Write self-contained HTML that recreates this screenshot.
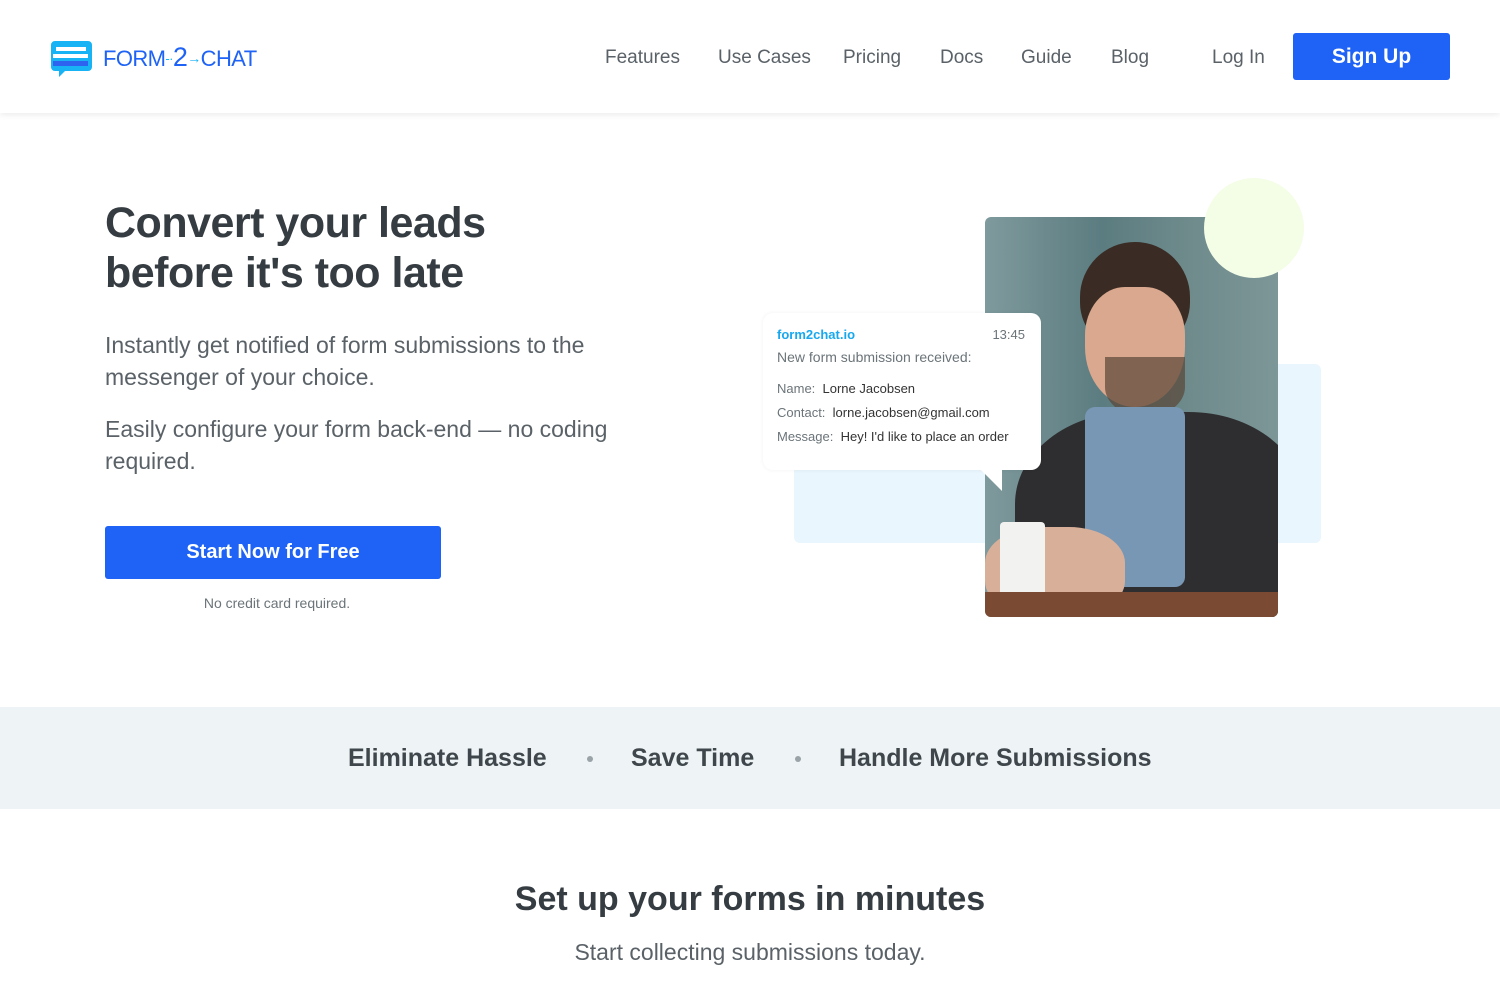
<!DOCTYPE html>
<html><head><meta charset="utf-8"><style>
*{margin:0;padding:0;box-sizing:border-box}
body{width:1500px;height:1000px;overflow:hidden;background:#fff;font-family:"Liberation Sans",sans-serif;color:#3d4449;position:relative}
.hdr{position:absolute;left:0;top:0;width:1500px;height:113px;background:#fff;box-shadow:0 2px 6px rgba(0,0,0,.08);z-index:5}
.nav a{position:absolute;top:47px;font-size:19px;color:#5a6268;text-decoration:none}
.btn{position:absolute;background:#1e63f5;color:#fff;font-weight:bold;border-radius:3px;text-align:center}
h1{position:absolute;left:105px;top:198px;font-size:43px;line-height:50px;font-weight:bold;color:#363d42;letter-spacing:-.5px}
.p{position:absolute;left:105px;font-size:23px;line-height:32px;color:#5a6268}
.band{position:absolute;left:0;top:707px;width:1500px;height:102px;background:#eef3f6}
.band span{position:absolute;top:37px;font-size:25px;font-weight:bold;color:#3f474c}
.dot{width:6px;height:6px;border-radius:3px;background:#9aa3a8;position:absolute;top:756px}
</style></head><body>
<div class="hdr">
<svg style="position:absolute;left:49px;top:39px" width="45" height="40" viewBox="0 0 45 40"><path d="M6 2h33a4 4 0 0 1 4 4v22a4 4 0 0 1-4 4H16l-6 6v-6H6a4 4 0 0 1-4-4V6a4 4 0 0 1 4-4z" fill="#17b3f5"/><rect x="7" y="8" width="30" height="4" fill="#fff"/><rect x="4" y="15" width="35" height="4" fill="#fff"/><rect x="4" y="22" width="35" height="5" fill="#2e63f0"/></svg>
<div style="position:absolute;left:103px;top:42px;font-size:22px;line-height:30px;color:#1e63f5;letter-spacing:-.6px;white-space:nowrap">FORM<span style="color:#17b3f5;font-size:13px;vertical-align:3px">-·</span><span style="font-size:27px">2</span><span style="color:#17b3f5;font-size:14px;vertical-align:3px">→</span>CHAT</div>
<div class="nav"><a style="left:605px">Features</a><a style="left:718px">Use Cases</a><a style="left:843px">Pricing</a><a style="left:940px">Docs</a><a style="left:1021px">Guide</a><a style="left:1111px">Blog</a><a style="left:1212px">Log In</a></div>
<div class="btn" style="left:1293px;top:33px;width:157px;height:47px;line-height:47px;font-size:21px">Sign Up</div>
</div>
<h1>Convert your leads<br>before it's too late</h1>
<div class="p" style="top:329px">Instantly get notified of form submissions to the<br>messenger of your choice.</div>
<div class="p" style="top:413px">Easily configure your form back-end — no coding<br>required.</div>
<div class="btn" style="left:105px;top:526px;width:336px;height:53px;line-height:53px;font-size:20px">Start Now for Free</div>
<div style="position:absolute;left:105px;top:595px;width:344px;text-align:center;font-size:14px;color:#6b7479">No credit card required.</div>

<div style="position:absolute;left:794px;top:364px;width:527px;height:179px;background:#e9f6fd;border-radius:6px"></div>
<div style="position:absolute;left:985px;top:217px;width:293px;height:400px;border-radius:6px;overflow:hidden;background:linear-gradient(90deg,#7f9a9d,#5b7c80 40%,#6f8b8c 70%,#7d9698)">
<div style="position:absolute;left:95px;top:25px;width:110px;height:110px;border-radius:50% 50% 45% 45%;background:#3a2c24"></div>
<div style="position:absolute;left:100px;top:70px;width:100px;height:120px;border-radius:40% 40% 50% 50%;background:#d9a88e"></div>
<div style="position:absolute;left:120px;top:140px;width:80px;height:60px;border-radius:0 0 50% 50%;background:#5a4638;opacity:.7"></div>
<div style="position:absolute;left:30px;top:195px;width:290px;height:230px;border-radius:40% 40% 0 0;background:#2e2e30"></div>
<div style="position:absolute;left:100px;top:190px;width:100px;height:180px;background:#7897b4;border-radius:10px"></div>
<div style="position:absolute;left:0px;top:310px;width:140px;height:90px;background:#d8b09a;border-radius:40%"></div>
<div style="position:absolute;left:15px;top:305px;width:45px;height:80px;background:#f2f2f0;border-radius:4px"></div>
<div style="position:absolute;left:0;top:375px;width:293px;height:25px;background:#7a4a32"></div>
</div>
<div style="position:absolute;left:1204px;top:178px;width:100px;height:100px;border-radius:50%;background:#f4fde6"></div>
<div style="position:absolute;left:763px;top:313px;width:278px;height:157px;background:#fff;border-radius:10px;box-shadow:0 0 4px rgba(0,0,0,.06);font-size:13px;color:#6b7479">
<div style="position:absolute;left:14px;top:14px;color:#17a8ef;font-weight:bold">form2chat.io</div>
<div style="position:absolute;right:16px;top:14px">13:45</div>
<div style="position:absolute;left:14px;top:36px;font-size:14px">New form submission received:</div>
<div style="position:absolute;left:14px;top:68px">Name:&nbsp; <span style="color:#333">Lorne Jacobsen</span></div>
<div style="position:absolute;left:14px;top:92px">Contact:&nbsp; <span style="color:#333">lorne.jacobsen@gmail.com</span></div>
<div style="position:absolute;left:14px;top:116px">Message:&nbsp; <span style="color:#333">Hey! I'd like to place an order</span></div>
</div>
<svg style="position:absolute;left:980px;top:469px" width="24" height="24"><path d="M0 0h22v22z" fill="#fff"/></svg>

<div class="band"><span style="left:348px">Eliminate Hassle</span><span style="left:631px">Save Time</span><span style="left:839px">Handle More Submissions</span></div>
<div class="dot" style="left:587px"></div><div class="dot" style="left:795px"></div>
<div style="position:absolute;left:0;width:1500px;top:880px;text-align:center;font-size:34px;font-weight:bold;color:#363d42">Set up your forms in minutes</div>
<div style="position:absolute;left:0;width:1500px;top:939px;text-align:center;font-size:23px;color:#5a6268">Start collecting submissions today.</div>
</body></html>
